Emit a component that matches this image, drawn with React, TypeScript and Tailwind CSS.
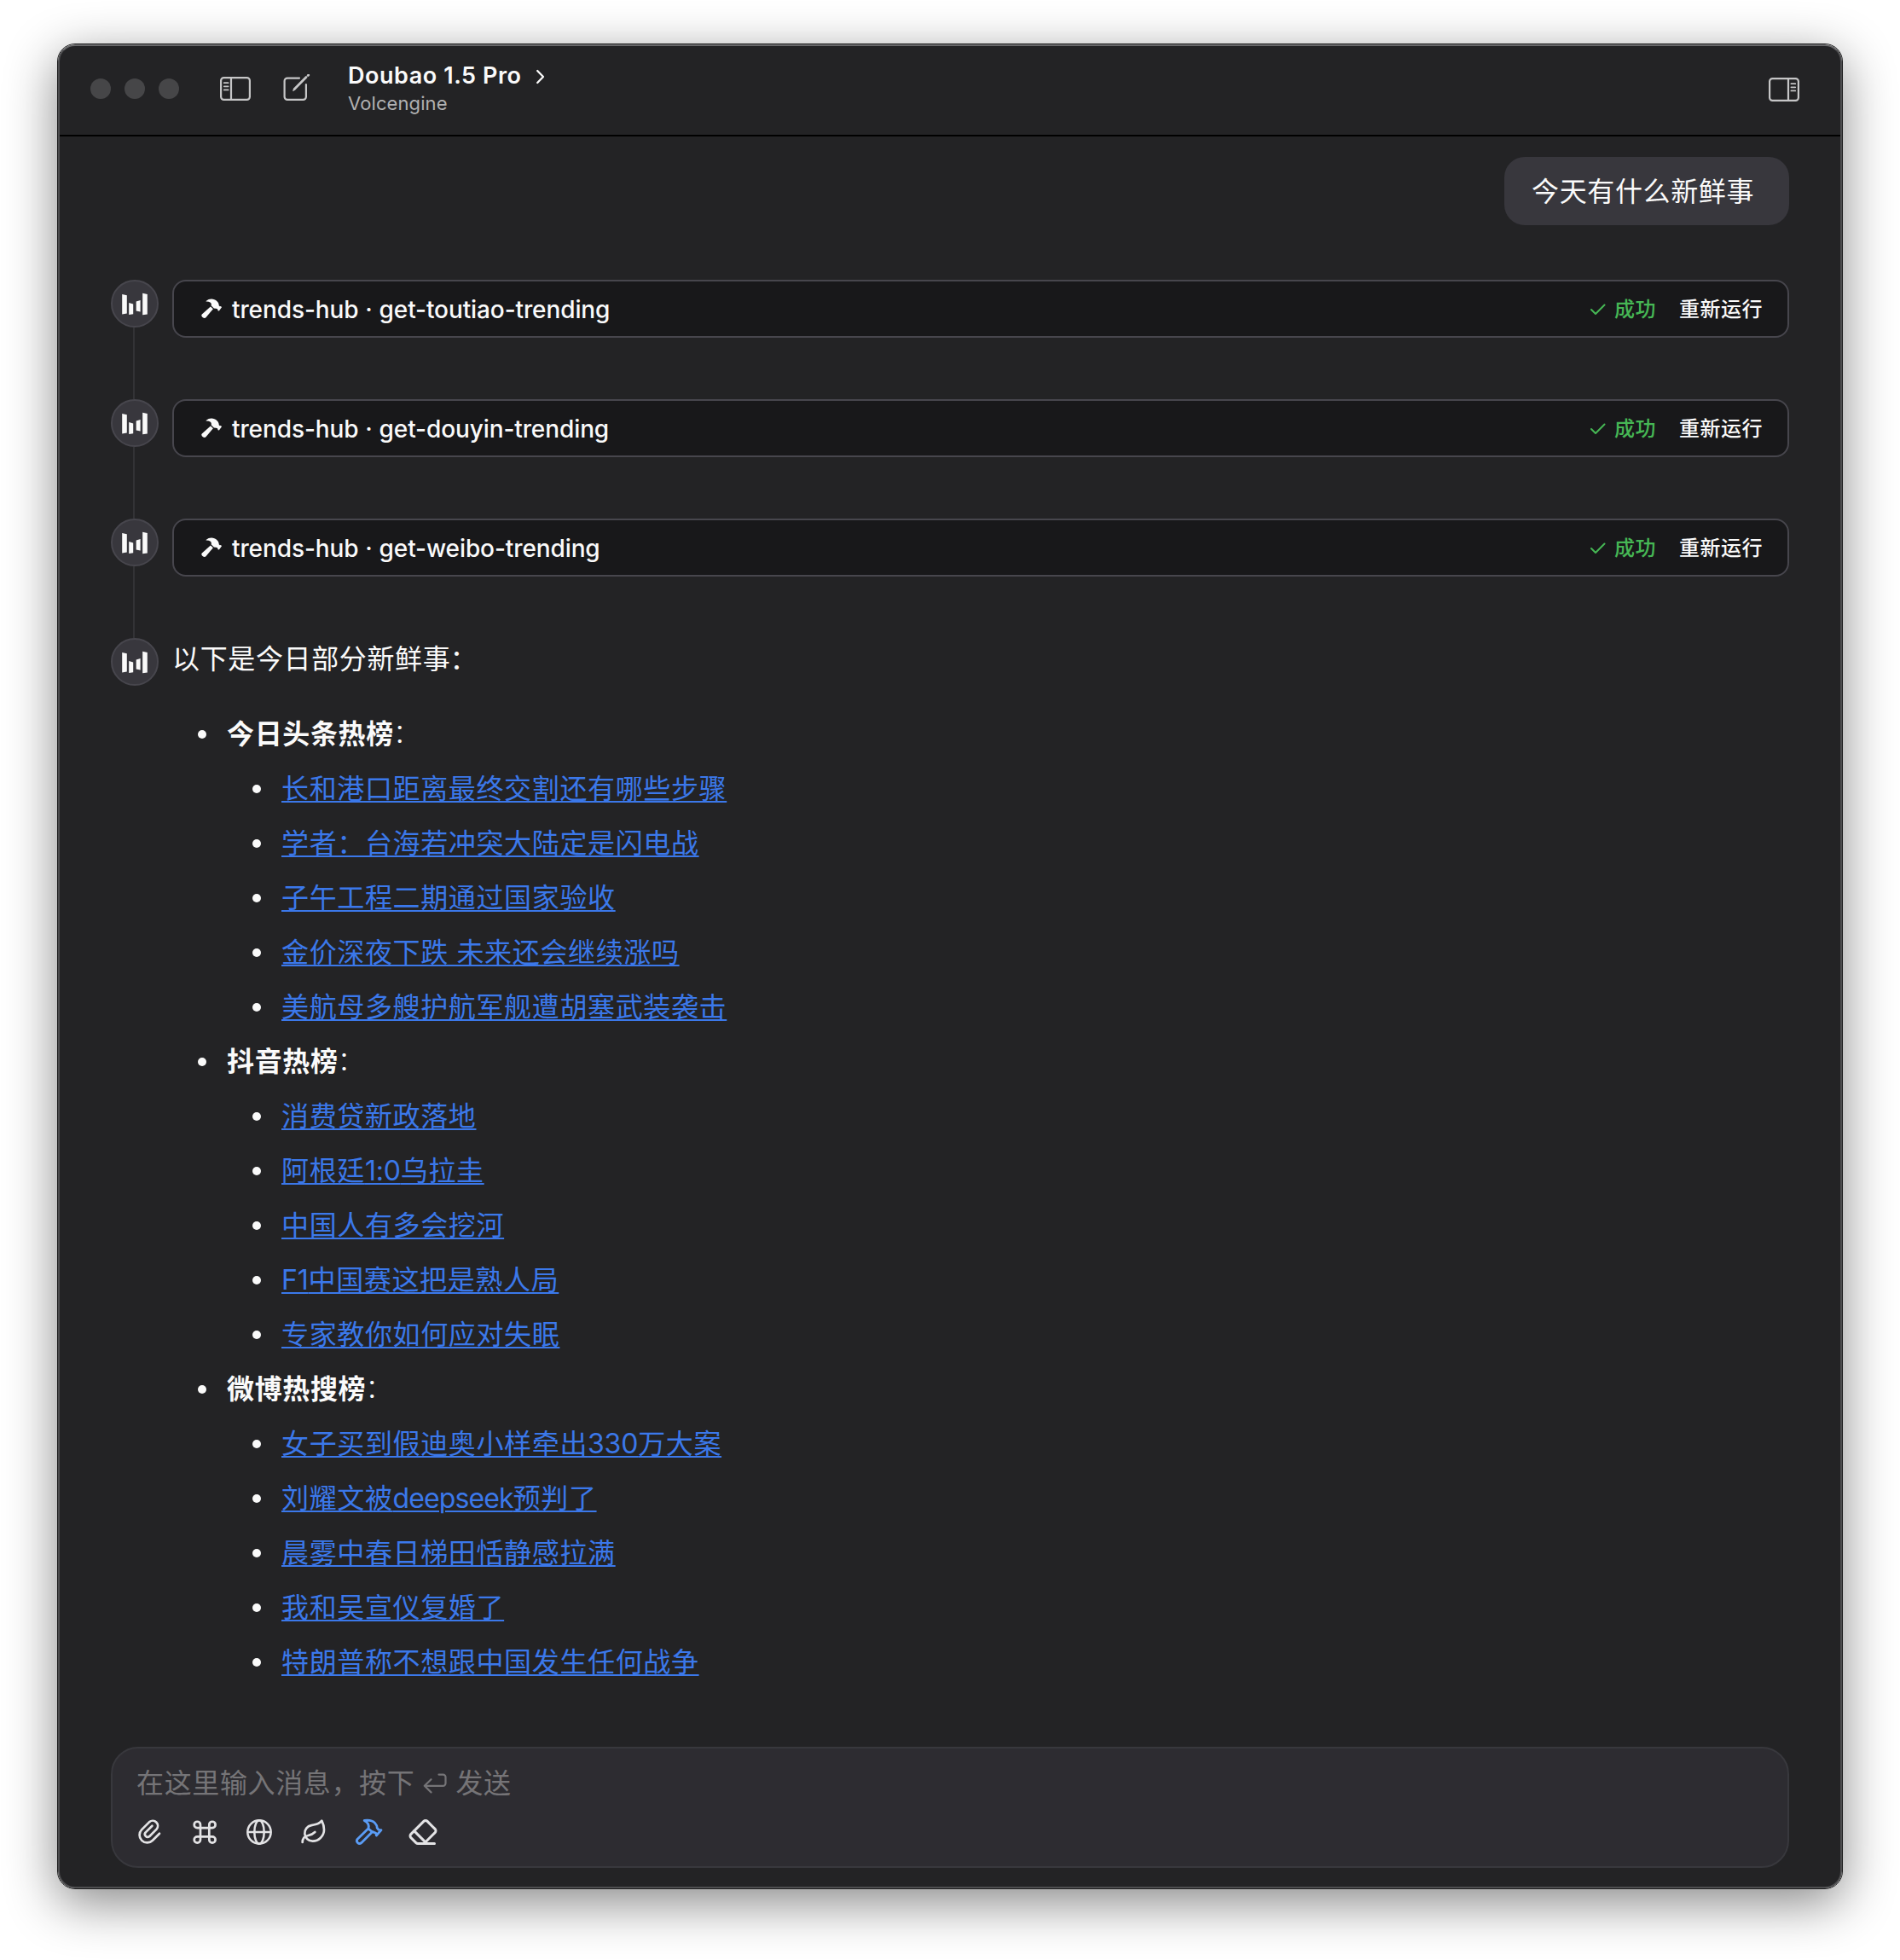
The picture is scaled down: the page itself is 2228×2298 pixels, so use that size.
import React from "react";
import { Eraser, Leaf } from "lucide-react";

const sections = [
  {
    title: "今日头条热榜",
    items: [
      "长和港口距离最终交割还有哪些步骤",
      "学者：台海若冲突大陆定是闪电战",
      "子午工程二期通过国家验收",
      "金价深夜下跌 未来还会继续涨吗",
      "美航母多艘护航军舰遭胡塞武装袭击",
    ],
  },
  {
    title: "抖音热榜",
    items: ["消费贷新政落地", "阿根廷1:0乌拉圭", "中国人有多会挖河", "F1中国赛这把是熟人局", "专家教你如何应对失眠"],
  },
  {
    title: "微博热搜榜",
    items: [
      "女子买到假迪奥小样牵出330万大案",
      "刘耀文被deepseek预判了",
      "晨雾中春日梯田恬静感拉满",
      "我和吴宣仪复婚了",
      "特朗普称不想跟中国发生任何战争",
    ],
  },
];

const tools = ["get-toutiao-trending", "get-douyin-trending", "get-weibo-trending"];

function SidebarIcon({ flip = false }: { flip?: boolean }) {
  return (
    <svg width="36" height="28" viewBox="0 0 36 28" fill="none" stroke="#c6c6c7" strokeWidth="2.2" className={flip ? "-scale-x-100" : ""}>
      <rect x="1.1" y="1.1" width="33.8" height="25.8" rx="3.4" />
      <path d="M13 1v26" />
      <path d="M4.8 7.2h4.8M4.8 11.3h4.8M4.8 15.4h4.8" strokeWidth="1.8" strokeLinecap="round" />
    </svg>
  );
}

function ComposeIcon() {
  return (
    <svg width="32" height="32" viewBox="0 0 32 32" fill="none" stroke="#c6c6c7" strokeWidth="2.2" strokeLinecap="round">
      <path d="M19 4.6H5A3.4 3.4 0 0 0 1.6 8V26.5A3.4 3.4 0 0 0 5 29.9H23.5A3.4 3.4 0 0 0 26.9 26.5V12" />
      <path d="M13.2 17.6 27 3.6" strokeWidth="2.8" />
      <path d="M29.2 1.5 29.7 1" strokeWidth="2.8" />
      <path d="M12 19.2 13.4 16.8" strokeWidth="1.6" />
    </svg>
  );
}

function Avatar() {
  return (
    <div className="size-14 rounded-full border-2 border-[#47464d] bg-[#38373d]">
      <svg width="52" height="52" viewBox="2 2 52 52" fill="#fafafa">
        <path d="M13.2 17 18.8 18.3V39.6L13.2 40.4Z" />
        <path d="M21.2 27 26.2 28.4V40.2L21.2 41Z" />
        <path d="M29.7 25.5 34.6 24V37.6L29.7 36.4Z" />
        <path d="M37.2 15.7 42.8 17V40.5L37.2 41.3Z" />
      </svg>
    </div>
  );
}

function SolidHammer() {
  return (
    <svg width="24" height="24" viewBox="0 0 24 24" fill="#fafafa">
      <path d="M5.6 3C9.5-.5 15-.2 18.5 3.2 20 4.8 20.8 6.2 20.7 8.2L21.8 9.2 23 8.9 24 10.2 20.9 14.6 19.6 14.2 19 12.2 17.2 11.8 14.9 11.5 11.6 8.3C12.6 5.6 10.6 3.4 5.6 3.6Z" />
      <path d="M10.9 9.4 13.9 12.3 5.2 22.6C3.4 24.4-1.2 20.6.8 18.6Z" />
    </svg>
  );
}

function ToolRow({ name }: { name: string }) {
  return (
    <div className="flex h-[140px] gap-4">
      <div className="flex w-14 flex-col items-center">
        <Avatar />
        <div className="-ml-0.5 w-0.5 flex-1 bg-[#333336]" />
      </div>
      <div className="flex h-[68px] flex-1 items-center rounded-2xl border-2 border-[#47464d] bg-[#18181a] pr-[29px] pl-8">
        <SolidHammer />
        <span className="ml-3 pt-px text-[28px] font-medium tracking-[-0.1px]">
          trends-hub <span className="mx-[0.5px]">·</span> {name}
        </span>
        <span className="ml-auto flex items-center pt-px text-[24px] font-medium tracking-[0.5px] text-[#46b755]">
          <svg width="18" height="14" viewBox="0 0 18 14" fill="none" stroke="currentColor" strokeWidth="2" strokeLinecap="round" strokeLinejoin="round" className="mr-2.5">
            <path d="M1 7 6 12 16.5 1.5" />
          </svg>
          成功
        </span>
        <span className="ml-[27px] pt-px text-[24px] font-medium tracking-[0.5px]">重新运行</span>
      </div>
    </div>
  );
}

/** Headline link; Latin runs are set tighter than the Chinese text around them. */
function Headline({ text }: { text: string }) {
  return (
    <a className="whitespace-pre text-[#3b78ea] underline decoration-2 underline-offset-[3px]">
      {text.split(/([a-z]+|[F0-9:]+)/).map((part, i) =>
        i % 2 ? (
          <span key={i} className={/[a-z]/.test(part) ? "tracking-[-0.9px]" : "tracking-[-0.2px]"}>
            {part}
          </span>
        ) : (
          part
        ),
      )}
    </a>
  );
}

function Composer() {
  return (
    <div className="mx-[60px] mb-[22px] flex h-[142px] flex-col rounded-[32px] border-2 border-[#38383d] bg-[#2d2c31] px-7 pt-[17px]">
      <div className="flex h-12 items-center text-[32px] tracking-[0.64px] text-[#757477]">
        在这里输入消息，按下
        <svg width="28" height="24" viewBox="0 0 28 24" fill="none" stroke="currentColor" strokeWidth="2.2" strokeLinecap="round" strokeLinejoin="round" className="mr-[10px] ml-[10px]">
          <path d="M18.5 1.6H23.5A3 3 0 0 1 26.5 4.6V11.8A3 3 0 0 1 23.5 14.8H2M9.5 7.2 1.8 14.8 9.5 22.4" />
        </svg>
        发送
      </div>
      <div className="mt-[17px] flex gap-8 text-[#e3e3e5]">
        <svg width="32" height="32" viewBox="0 0 32 32" fill="none" stroke="currentColor" strokeWidth="2.7" strokeLinecap="round" strokeLinejoin="round">
          <path d="M27 17.8 19 25.8A9 9 0 0 1 6.2 13.1L15.2 4.1A6 6 0 0 1 23.6 12.6L15.1 21.2A3.3 3.3 0 0 1 10.5 16.6L18.4 8.8" />
        </svg>
        <svg width="32" height="32" viewBox="0 0 32 32" fill="none" stroke="currentColor" strokeWidth="2.7">
          <path d="M21.3 7.4V25a3.65 3.65 0 1 0 3.65-3.65H7.35A3.65 3.65 0 1 0 11 25V7.4a3.65 3.65 0 1 0-3.65 3.65H24.95A3.65 3.65 0 1 0 21.3 7.4Z" />
        </svg>
        <svg width="32" height="32" viewBox="0 0 32 32" fill="none" stroke="currentColor" strokeWidth="2.5">
          <circle cx="16" cy="16" r="13.7" />
          <ellipse cx="16" cy="16" rx="5.7" ry="13.7" />
          <path d="M2.5 16H29.5" />
        </svg>
        <Leaf size={32} strokeWidth={2} />
        <svg width="32" height="32" viewBox="0 0 32 32" fill="none" stroke="#5a9cf5" strokeWidth="2.8" strokeLinejoin="round" className="overflow-visible">
          <path d="M11.2 2.4C17 1.6 21 2.6 23.6 5.4 25.5 7.4 26.3 9 26.2 11.2L28 13.4 31 13.6 25.4 20 24.8 17.2 20.8 15.6 7.7 28.7A3.2 3.2 0 0 1 3.2 24.2L16 11.8C17 8 15.4 4.6 11.2 2.4Z" />
          <path d="M15.6 11.8 20.8 16" />
        </svg>
        <Eraser size={36} strokeWidth={2} className="-my-0.5 -ml-0.5" />
      </div>
    </div>
  );
}

export default function App() {
  return (
    <div className="h-[2298px] w-[2228px] overflow-hidden bg-white pt-[51px] pl-[67px] font-['Inter','Noto_Sans_CJK_SC',sans-serif] text-[#fafafa]">
      <div className="h-[2164px] w-[2094px] rounded-[21px] border border-[#1c1c1d] shadow-[0_16px_60px_rgba(0,0,0,0.47)]">
        <div className="flex h-full flex-col overflow-hidden rounded-[20px] border-2 border-[#4e4e50] border-t-[#68686a] bg-[#232325]">
          <header className="flex h-[106px] shrink-0 items-center border-b-2 border-black pr-[48px] pb-[2px] pl-9">
            <div className="-mt-0.5 flex gap-4">
              <i className="size-6 rounded-full bg-[#464648]" />
              <i className="size-6 rounded-full bg-[#464648]" />
              <i className="size-6 rounded-full bg-[#464648]" />
            </div>
            <div className="-mt-0.5 ml-12">
              <SidebarIcon />
            </div>
            <div className="-mt-[5px] ml-[38px]">
              <ComposeIcon />
            </div>
            <div className="ml-11 flex flex-col">
              <div className="flex h-8 items-center pt-px text-[27px] font-semibold tracking-[0.55px]">
                Doubao 1.5 Pro
                <svg width="12" height="18" viewBox="0 0 12 18" fill="none" stroke="currentColor" strokeWidth="2.3" strokeLinecap="round" strokeLinejoin="round" className="ml-4">
                  <path d="M2.2 2 9 9 2.2 16" />
                </svg>
              </div>
              <div className="h-8 text-[22px] leading-8 tracking-[0.1px] text-[#b1b1b2]">Volcengine</div>
            </div>
            <div className="ml-auto">
              <SidebarIcon flip />
            </div>
          </header>
          <main className="flex-1 px-[60px] pt-6">
            <div className="mb-16 ml-auto h-20 w-[334px] rounded-3xl bg-[#38373d] pl-8 text-[32px] leading-[82px] tracking-[0.64px]">今天有什么新鲜事</div>
            {tools.map((t) => (
              <ToolRow key={t} name={t} />
            ))}
            <div className="flex gap-4 text-[32px] tracking-[0.64px]">
              <Avatar />
              <div>
                <p className="h-[81px] leading-[50px]">
                  以下是今日部分新鲜事<span className="-ml-px">：</span>
                </p>
                <ul>
                  {sections.map((s) => (
                    <li key={s.title}>
                      <div className="flex h-16 items-center pl-[30px]">
                        <i className="mr-6 size-2.5 rounded-full bg-[#fafafa]" />
                        <strong className="font-semibold">{s.title}</strong>
                        <span className="-mt-0.5 -ml-px font-light">：</span>
                      </div>
                      <ul>
                        {s.items.map((it) => (
                          <li key={it} className="flex h-16 items-center pl-[94px]">
                            <i className="mr-6 size-2.5 rounded-full bg-[#fafafa]" />
                            <Headline text={it} />
                          </li>
                        ))}
                      </ul>
                    </li>
                  ))}
                </ul>
              </div>
            </div>
          </main>
          <Composer />
        </div>
      </div>
    </div>
  );
}
